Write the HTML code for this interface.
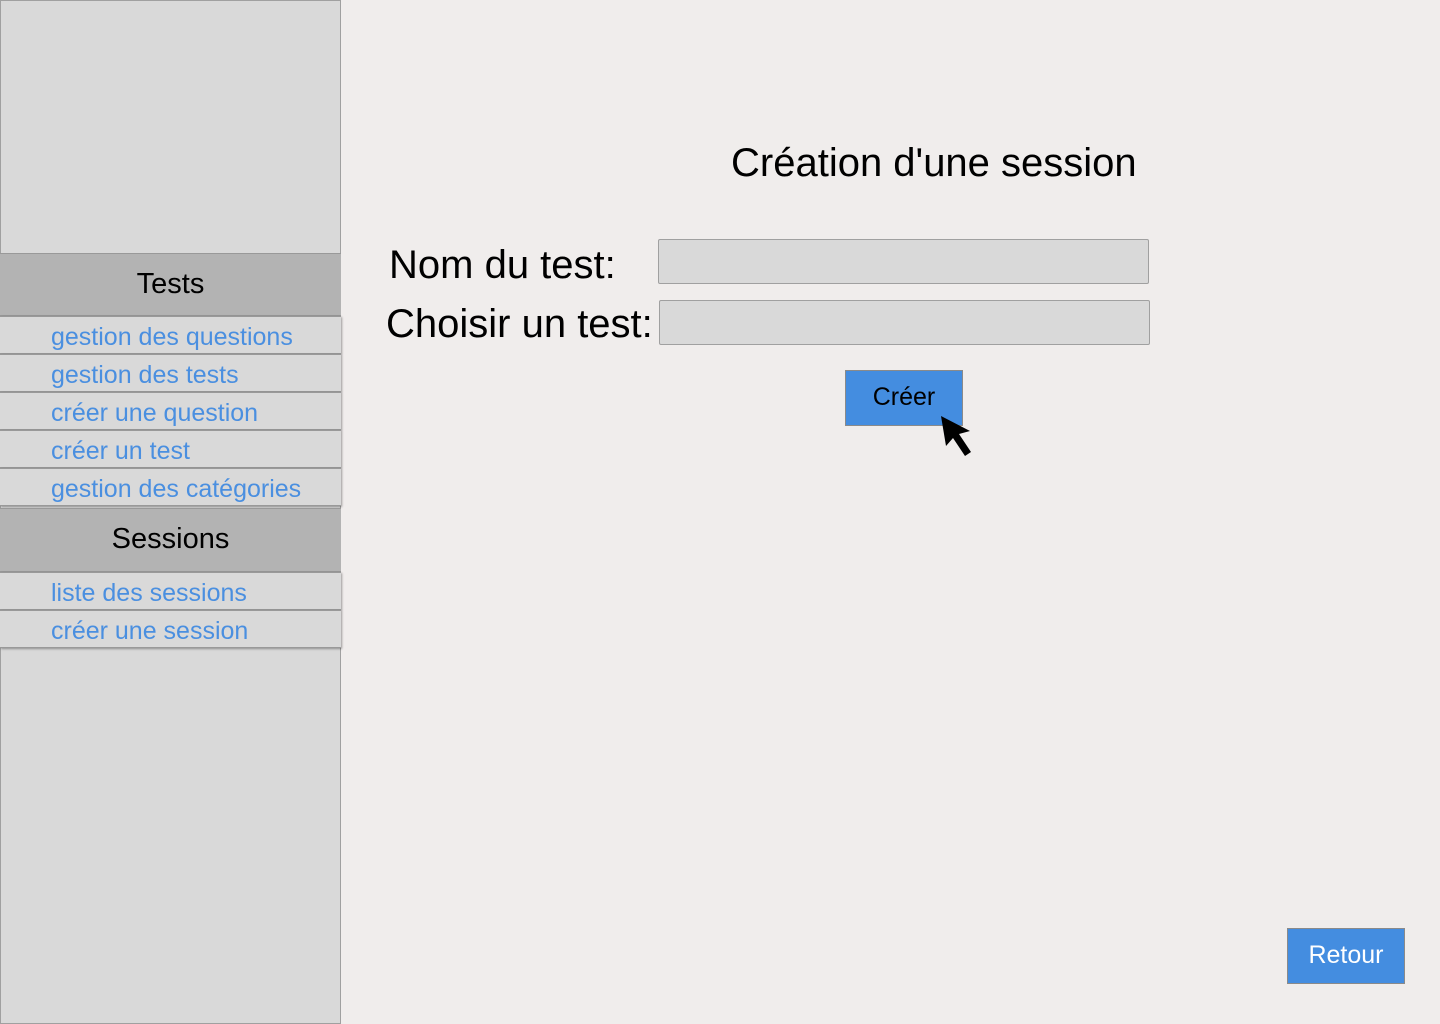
<!DOCTYPE html>
<html><head><meta charset="utf-8"><style>
*{margin:0;padding:0;box-sizing:border-box}
body{width:1440px;height:1024px;background:#f0edec;font-family:"Liberation Sans",Helvetica,Arial,sans-serif;position:relative;overflow:hidden}
.a{position:absolute}
#side{left:0;top:0;width:341px;height:1024px;background:#d9d9d9;border:1px solid #a0a0a0}
.hd{left:0;width:341px;background:#b3b3b3;border-top:1px solid #999;border-bottom:1px solid #999;text-align:center;font-size:29px;color:#000}
.it{left:0;width:341px;height:38px;background:#d9d9d9;border-top:1px solid #999;border-bottom:1px solid #999;box-shadow:1px 1px 2px rgba(0,0,0,.35);color:#4a8fe0;font-size:25px;padding-left:51px;line-height:40px}
.lbl{font-size:40px;color:#000;white-space:nowrap}
.inp{background:#d9d9d9;border:1px solid #a0a0a0;border-radius:2px}
.btn{background:#448de0;border:1px solid #8a8a8a;color:#000;text-align:center}
</style></head><body>
<div class="a" id="side"></div>
<div class="a hd" style="top:253px;height:63px;line-height:60px">Tests</div>
<div class="a it" style="top:316px">gestion des questions</div>
<div class="a it" style="top:354px">gestion des tests</div>
<div class="a it" style="top:392px">créer une question</div>
<div class="a it" style="top:430px">créer un test</div>
<div class="a it" style="top:468px">gestion des catégories</div>
<div class="a hd" style="top:508px;height:64px;line-height:60px">Sessions</div>
<div class="a it" style="top:572px">liste des sessions</div>
<div class="a it" style="top:610px">créer une session</div>

<div class="a" style="left:731px;top:141px;font-size:40px;white-space:nowrap">Création d'une session</div>
<div class="a lbl" style="left:389px;top:243px">Nom du test:</div>
<div class="a lbl" style="left:386px;top:302px">Choisir un test:</div>
<div class="a inp" style="left:658px;top:239px;width:491px;height:45px"></div>
<div class="a inp" style="left:659px;top:300px;width:491px;height:45px"></div>
<div class="a btn" style="left:845px;top:370px;width:118px;height:56px;font-size:25px;line-height:52px">Créer</div>
<svg class="a" style="left:935px;top:410px" width="45" height="50" viewBox="0 0 45 50">
<path d="M6 6 L11 36 L18 28 L30 46 L36 42 L24 24 L35 21 Z" fill="#000"/>
</svg>
<div class="a btn" style="left:1287px;top:928px;width:118px;height:56px;font-size:25px;line-height:52px;color:#fff">Retour</div>
</body></html>
